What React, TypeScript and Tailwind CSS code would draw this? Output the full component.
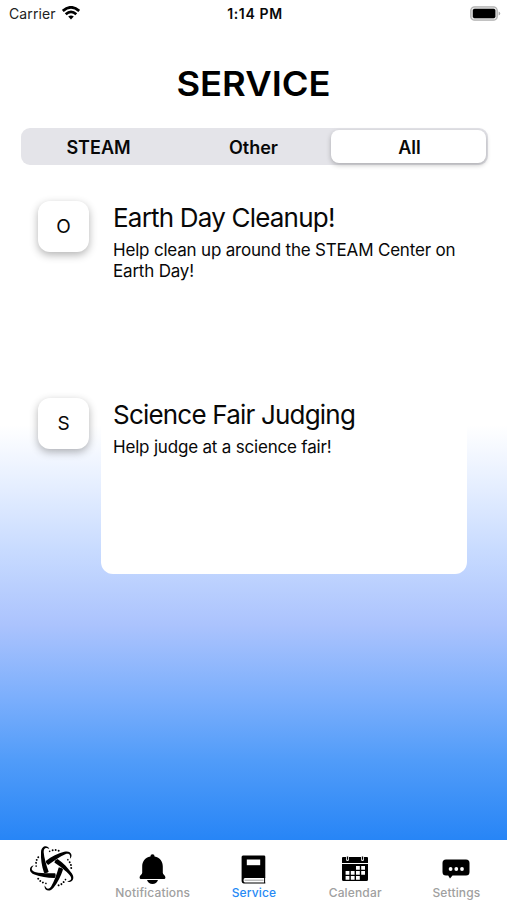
import React from 'react';

type Service = {
  initial: string;
  title: string;
  description: string;
};

const SERVICES: Service[] = [
  {
    initial: 'O',
    title: 'Earth Day Cleanup!',
    description: 'Help clean up around the STEAM Center on Earth Day!',
  },
  {
    initial: 'S',
    title: 'Science Fair Judging',
    description: 'Help judge at a science fair!',
  },
];

const SPOKES = [0, 72, 144, 216, 288];

const WifiIcon = () => (
  <svg className="h-[14px] w-[18px]" viewBox="0 0 18 14" fill="none" stroke="#000" strokeWidth="2.7">
    <path d="M.8 4.9Q9-2.3 17.2 4.9" />
    <path d="M3.7 8.2Q9 3.4 14.3 8.2" />
    <path d="M6.2 10.6Q9 8.3 11.8 10.6L9 13.4Z" fill="#000" stroke="none" />
  </svg>
);

const BatteryIcon = () => (
  <svg className="h-[15px] w-[31px]" viewBox="0 0 31 15">
    <rect x=".8" y=".8" width="26.4" height="13.4" rx="3.8" fill="#e4e4e4" stroke="#b0b0b0" strokeWidth="1.3" />
    <rect x="2.8" y="2.8" width="22.6" height="9.4" rx="1.8" fill="#000" />
    <path d="M28.6 5.4Q30.2 6 30.2 7.5T28.6 9.6Z" fill="#aaa" />
  </svg>
);

const LogoIcon = () => (
  <svg className="h-[46px] w-[46px]" viewBox="-69 -69 138 138">
    {SPOKES.map((angle) => (
      <g key={angle} transform={`rotate(${angle})`}>
        <path d="M-11 -57C-15 -69 -35 -69 -36 -47C-37 -27 -34 -7 -27 14Q-19 17 -13 11C-20 -8 -27 -31 -28 -48C-28 -62 -20 -62 -11 -57Z" />
        <circle cx="-10" cy="-50" r="2.5" />
        <circle cx="-1" cy="-53" r="2.9" />
        <circle cx="8" cy="-54" r="2.9" />
        <circle cx="17" cy="-52" r="2.9" />
      </g>
    ))}
  </svg>
);

const BellIcon = () => (
  <svg className="h-[30px] w-[27px]" viewBox="0 0 27 30">
    <path d="M11.4 2.4a2.1 2.1 0 0 1 4.2 0C21 3.3 23.8 7.5 23.8 12.5v6.2c0 1.8 2.6 2.4 2.6 4.7 0 1.2-.7 1.7-1.8 1.7H2.4C1.3 25.1.6 24.6.6 23.4c0-2.3 2.6-2.9 2.6-4.7v-6.2C3.2 7.5 6 3.3 11.4 2.4Z" />
    <path d="M8 26.1h11q-1.5 3.9-5.5 3.9T8 26.1Z" />
  </svg>
);

const BookIcon = () => (
  <svg className="h-[29px] w-[25px]" viewBox="0 0 25 29">
    <path d="M2 .5h21q1.3 0 1.3 1.3v21.2H4Q2.5 23 2.5 25.3T4 27.6h20.3v1H3Q.6 28.6.6 25.6V2Q.6.5 2 .5Z" />
    <path d="M23.6 22.5v5.5" stroke="#000" strokeWidth="1" />
    <path d="M3.5 25.2h19" stroke="#888" strokeWidth=".8" />
    <path d="M5.8 4.5h13.4v5.7H5.8Z" fill="#fff" />
  </svg>
);

const CalendarIcon = () => (
  <svg className="h-[26px] w-[28px]" viewBox="0 0 28 26">
    <path d="M2 1h3V4.2q1.500 1.500 3 0V1h12V4.200q1.500 1.500 3 0V1h3q1 0 1 1V7H1V2q0-1 1-1ZM1 8h26v15.500q0 1.500-1.500 1.500h-23Q1 25 1 23.500Z" />
    <path d="M5.800.5h1.400v3.300H5.800zM20.800.5h1.400v3.300h-1.400z" />
    <g fill="#fff">
      <path d="M15 10h3.800v3.800H15zM20.200 10h3.800v3.800h-3.800z" />
      <path d="M4.600 15h3.800v3.800H4.600zM9.800 15h3.800v3.800H9.800zM15 15h3.800v3.800H15zM20.200 15h3.800v3.800h-3.800z" />
      <path d="M4.600 20h3.800v3.800H4.600zM9.800 20h3.800v3.800H9.800zM15 20h3.800v3.800H15z" />
    </g>
  </svg>
);

const ChatIcon = () => (
  <svg className="h-[20px] w-[28px]" viewBox="0 0 28 20">
    <path d="M4 .5h20q3.5 0 3.5 3.5v9q0 3.5-3.5 3.5H10.500L8 19.500 6.200 16.500H4Q.5 16.500.5 13V4Q.5.5 4 .5Z" />
    <g fill="#fff">
      <circle cx="8.6" cy="10" r="1.9" />
      <circle cx="14.3" cy="10" r="1.9" />
      <circle cx="20" cy="10" r="1.9" />
    </g>
  </svg>
);

const TABS = [
  { label: 'Notifications', icon: <BellIcon />, active: false },
  { label: 'Service', icon: <BookIcon />, active: true },
  { label: 'Calendar', icon: <CalendarIcon />, active: false },
  { label: 'Settings', icon: <ChatIcon />, active: false },
];

const StatusBar = () => (
  <header className="grid h-[26px] shrink-0 grid-cols-[1fr_auto_1fr] items-center pr-[6px] pl-[9px] text-[14px]">
    <div className="flex items-center gap-[6px] text-[#222]">
      <span className="tracking-[0.1px]">Carrier</span>
      <WifiIcon />
    </div>
    <div className="text-center font-semibold tracking-[0.65px]">1:14 PM</div>
    <div className="flex justify-end">
      <BatteryIcon />
    </div>
  </header>
);

const ServiceRow: React.FC<{ service: Service }> = ({ service }) => (
  <article className="flex h-[183px] items-start">
    <div className="mt-[7px] flex size-[51px] shrink-0 items-center justify-center rounded-[12px] bg-white pt-px text-[19px] shadow-[0_3px_9px_rgba(0,0,0,0.3)]">
      {service.initial}
    </div>
    <div className="ml-[12px] h-full w-[366px] rounded-[12px] bg-white pt-[7px] pl-3">
      <h2 className="text-[26px] leading-[34px] tracking-[-0.8px] whitespace-nowrap">{service.title}</h2>
      <p className="mt-[5px] w-[350px] text-[17px] leading-[21px] tracking-[-0.19px]">{service.description}</p>
    </div>
  </article>
);

const TabBar = () => (
  <nav className="grid h-[60px] shrink-0 grid-cols-5 bg-white pl-px">
    <button className="flex items-start justify-center pt-[5px] pl-[2px]" aria-label="Home">
      <LogoIcon />
    </button>
    {TABS.map((tab) => (
      <button key={tab.label} className="flex flex-col items-center">
        <span className="flex h-[45px] items-center pt-[13px]">{tab.icon}</span>
        <span
          className={
            tab.active
              ? 'text-[12px] leading-[15px] font-medium tracking-[0.15px] text-[#278af5]'
              : 'text-[12px] leading-[15px] font-medium tracking-[0.15px] text-[#a0a0a0]'
          }
        >
          {tab.label}
        </span>
      </button>
    ))}
  </nav>
);

const App: React.FC = () => {
  return (
    <div className="flex h-[900px] w-[507px] flex-col overflow-hidden bg-[linear-gradient(180deg,#fff_0px,#fff_425px,#e8f0ff_480px,#c8dbff_550px,#abc3fd_625px,#7aaefc_700px,#519cf9_760px,#2785f6_840px)] font-['Inter','Liberation_Sans',sans-serif] text-[#080808]">
      <StatusBar />

      <h1 className="mt-[35px] scale-x-107 text-center text-[34px] leading-[46px] font-semibold text-black">
        SERVICE
      </h1>

      {/* Category filter */}
      <div className="mr-[19px] ml-[21px] mt-[21px] grid h-[37px] shrink-0 grid-cols-3 rounded-[9px] bg-[#e4e4e9] p-[2px] pl-0 text-[18px] font-semibold">
        <button className="pt-px">STEAM</button>
        <button className="pt-px">Other</button>
        <button className="rounded-[8px] bg-white pt-px pl-[2px] shadow-[0_2px_5px_rgba(0,0,0,0.25)]">All</button>
      </div>

      <main className="flex flex-1 flex-col gap-[14px] pt-[29px] pl-[38px]">
        {SERVICES.map((service) => (
          <ServiceRow key={service.title} service={service} />
        ))}
      </main>

      <TabBar />
    </div>
  );
};

export default App;
